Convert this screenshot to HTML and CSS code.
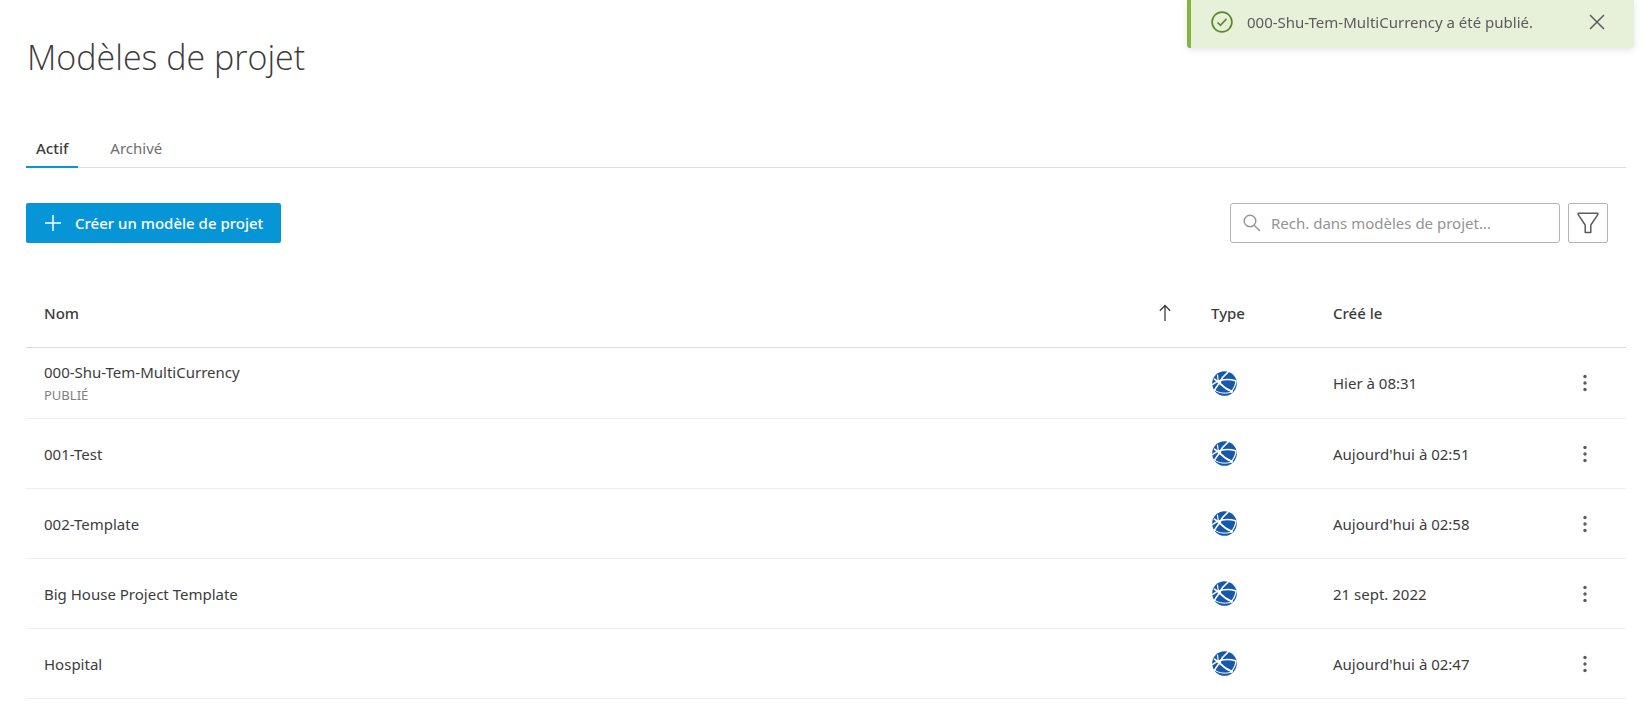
FILE: index.html
```html
<!DOCTYPE html>
<html lang="fr">
<head>
    <meta charset="UTF-8">
    <meta name="viewport" content="width=device-width, initial-scale=1.0">
    <title>Modèles de projet</title>
    <link rel="stylesheet" href="styles.css">
</head>
<body>
    <!-- shared icons -->
    <svg class="sprite" aria-hidden="true">
        <symbol id="icon-globe" viewBox="0 0 25 25">
            <circle cx="12.5" cy="12.5" r="12.3" fill="#1858a8"/>
            <g fill="none" stroke="#fff" stroke-linecap="round">
                <path stroke-width="1.600" d="M16 1.200C12.500 4 9.500 7.500 7.500 11.800C5.500 14.500 3.500 17 2.600 19"/>
                <path stroke-width="1.700" d="M2.500 8.200C4.500 9.200 6 10.300 7.500 11.800C11 15.500 15 18.500 19.500 20.300"/>
                <path stroke-width="1.500" d="M.5 13.500C5 9.500 14 6.800 23.500 9.800"/>
                <path stroke-width="1.300" d="M24 10C23.600 14 22 17.500 19.500 20.300"/>
                <path stroke-width="1" d="M2.500 19C7.500 22.800 14 22.800 20.500 21"/>
                <path stroke-width="1.200" d="M5.500 4.200C5.500 6.500 6.300 9.500 7.500 11.800"/>
            </g>
            <circle cx="7.500" cy="11.800" r="1.700" fill="#fff"/>
            <circle cx="19.500" cy="20.300" r="1.400" fill="#fff"/>
        </symbol>
        <symbol id="icon-more" viewBox="0 0 24 24">
            <g fill="#5c5c5c">
                <circle cx="12" cy="5.500" r="1.700"/>
                <circle cx="12" cy="12" r="1.700"/>
                <circle cx="12" cy="18.500" r="1.700"/>
            </g>
        </symbol>
    </svg>

    <div class="toast" role="status">
        <svg class="toast-icon" viewBox="0 0 22 22" fill="none" stroke="#5b8a2a">
            <circle cx="11" cy="11" r="9.900" stroke-width="1.700"/>
            <path d="M6.500 11.500l3 2.800l6-6.600" stroke-width="1.700"/>
        </svg>
        <span class="toast-text">000-Shu-Tem-MultiCurrency a été publié.</span>
        <button class="icon-button" type="button" aria-label="Fermer">
            <svg width="16" height="16" viewBox="0 0 16 16" fill="none" stroke="#5c5c5c" stroke-width="1.500">
                <path d="M1 1l14 14M15 1L1 15"/>
            </svg>
        </button>
    </div>

    <main class="page">
        <h1>Modèles de projet</h1>

        <nav class="tabs">
            <a class="tab active" href="#actif">Actif</a>
            <a class="tab" href="#archive">Archivé</a>
        </nav>

        <div class="toolbar">
            <button class="create-button" type="button">
                <svg width="18" height="18" viewBox="0 0 18 18" fill="none" stroke="#fff" stroke-width="1.500">
                    <path d="M9 1v16M1 9h16"/>
                </svg>
                Créer un modèle de projet
            </button>
            <div class="filters">
                <label class="search">
                    <svg width="18" height="18" viewBox="0 0 18 18" fill="none" stroke="#949494" stroke-width="1.400">
                        <circle cx="7" cy="7" r="5.800"/>
                        <path d="M11.200 11.200L17 17"/>
                    </svg>
                    <input type="text" placeholder="Rech. dans modèles de projet…" aria-label="Rechercher dans les modèles de projet">
                </label>
                <button class="filter-button" type="button" aria-label="Filtrer">
                    <svg width="22" height="22" viewBox="0 0 22 22" fill="none" stroke="#5c5c5c" stroke-width="1.500" stroke-linejoin="round">
                        <path d="M1.200 1.200h19.600v1.500L13.800 13v7.500h-5.600V13L1.200 2.700z"/>
                    </svg>
                </button>
            </div>
        </div>

        <table class="templates">
            <thead>
                <tr>
                    <th class="col-name" scope="col" aria-sort="ascending">
                        <div class="sortable">
                            Nom
                            <svg width="12" height="18" viewBox="0 0 12 18" fill="none" stroke="#3c3c3c" stroke-width="1.300">
                                <path d="M6 17V1.500M.8 6.700L6 1.500l5.200 5.200"/>
                            </svg>
                        </div>
                    </th>
                    <th class="col-type" scope="col">Type</th>
                    <th class="col-date" scope="col">Créé le</th>
                    <th class="col-menu" scope="col"></th>
                </tr>
            </thead>
            <tbody>
                <tr>
                    <td>000-Shu-Tem-MultiCurrency<span class="status">PUBLIÉ</span></td>
                    <td><svg class="globe"><use href="#icon-globe"/></svg></td>
                    <td>Hier à 08:31</td>
                    <td class="menu"><button class="icon-button" type="button" aria-label="Plus d'actions"><svg class="more"><use href="#icon-more"/></svg></button></td>
                </tr>
                <tr>
                    <td>001-Test</td>
                    <td><svg class="globe"><use href="#icon-globe"/></svg></td>
                    <td>Aujourd'hui à 02:51</td>
                    <td class="menu"><button class="icon-button" type="button" aria-label="Plus d'actions"><svg class="more"><use href="#icon-more"/></svg></button></td>
                </tr>
                <tr>
                    <td>002-Template</td>
                    <td><svg class="globe"><use href="#icon-globe"/></svg></td>
                    <td>Aujourd'hui à 02:58</td>
                    <td class="menu"><button class="icon-button" type="button" aria-label="Plus d'actions"><svg class="more"><use href="#icon-more"/></svg></button></td>
                </tr>
                <tr>
                    <td>Big House Project Template</td>
                    <td><svg class="globe"><use href="#icon-globe"/></svg></td>
                    <td>21 sept. 2022</td>
                    <td class="menu"><button class="icon-button" type="button" aria-label="Plus d'actions"><svg class="more"><use href="#icon-more"/></svg></button></td>
                </tr>
                <tr>
                    <td>Hospital</td>
                    <td><svg class="globe"><use href="#icon-globe"/></svg></td>
                    <td>Aujourd'hui à 02:47</td>
                    <td class="menu"><button class="icon-button" type="button" aria-label="Plus d'actions"><svg class="more"><use href="#icon-more"/></svg></button></td>
                </tr>
            </tbody>
        </table>
    </main>
</body>
</html>
```
FILE: styles.css
```css
* {
    box-sizing: border-box;
}

body {
    margin: 0;
    background-color: #ffffff;
    color: #3c3c3c;
    font-family: "Noto Sans", "Open Sans", sans-serif;
    font-size: 15px;
    line-height: 20px;
}

button,
input {
    font: inherit;
}

svg {
    display: block;
    flex: none;
}

.sprite {
    position: absolute;
    width: 0;
    height: 0;
}

.page {
    padding: 32px 23px 0 26px;
}

h1 {
    margin: 0;
    padding-left: 1px;
    font-family: "Open Sans", "Noto Sans", sans-serif;
    font-size: 34px;
    font-weight: 300;
    line-height: 50px;
}

/* Notification */
.toast {
    position: fixed;
    top: 0;
    right: 15px;
    display: flex;
    align-items: center;
    width: 447px;
    height: 48px;
    padding: 0 26px 5px 20px;
    border-left: 4px solid #87b340;
    border-radius: 0 0 3px 3px;
    background-color: #e7f0d9;
    box-shadow: 0 2px 6px rgba(60, 80, 120, 0.15);
}

.toast-icon {
    width: 22px;
    height: 22px;
    margin-right: 14px;
}

.toast-text {
    flex: 1;
    color: #5c5c5c;
    white-space: nowrap;
}

.icon-button {
    display: flex;
    padding: 3px;
    border: none;
    background: none;
    cursor: pointer;
}

/* Tabs */
.tabs {
    display: flex;
    gap: 22px;
    margin-top: 50px;
    border-bottom: 1px solid #dcdcdc;
}

.tab {
    margin-bottom: -1px;
    padding: 6px 10px 8px;
    border-bottom: 2px solid transparent;
    color: #6e6e6e;
    text-decoration: none;
}

.tab.active {
    border-bottom-color: #0696d7;
    color: #3c3c3c;
    font-weight: 500;
}

/* Toolbar */
.toolbar {
    display: flex;
    justify-content: space-between;
    margin-top: 35px;
    padding-right: 18px;
}

.create-button {
    display: flex;
    align-items: center;
    gap: 13px;
    height: 40px;
    padding: 0 18px;
    border: none;
    border-radius: 2px;
    background-color: #0696d7;
    color: #ffffff;
    font-weight: 500;
    cursor: pointer;
}

.filters {
    display: flex;
    gap: 8px;
}

.search {
    display: flex;
    align-items: center;
    gap: 10px;
    width: 330px;
    height: 40px;
    padding: 0 12px;
    border: 1px solid #b4b4b4;
    border-radius: 3px;
}

.search input {
    flex: 1;
    min-width: 0;
    padding: 0;
    border: none;
    outline: none;
    background: none;
    color: #3c3c3c;
}

.search input::placeholder {
    color: #949494;
    opacity: 1;
}

.filter-button {
    display: flex;
    align-items: center;
    justify-content: center;
    width: 40px;
    height: 40px;
    padding: 0;
    border: 1px solid #b4b4b4;
    border-radius: 2px;
    background-color: #ffffff;
    cursor: pointer;
}

/* Table */
.templates {
    width: 100%;
    margin-top: 35px;
    border-collapse: separate;
    border-spacing: 0;
    table-layout: fixed;
}

.templates th,
.templates td {
    height: 70px;
    padding: 0 18px;
    text-align: left;
    vertical-align: middle;
}

.templates th {
    border-bottom: 1px solid #dcdcdc;
    font-weight: 500;
}

.templates td {
    border-bottom: 1px solid #eeeeee;
}

.templates tbody tr:first-child td {
    height: 71px;
}

.templates td.menu {
    padding-left: 21px;
}

.templates .col-type {
    width: 122px;
}

.templates .col-date {
    width: 234px;
}

.templates .col-menu {
    width: 77px;
}

.sortable {
    display: flex;
    align-items: center;
    justify-content: space-between;
    padding-right: 4px;
}

.status {
    display: block;
    margin-top: 3px;
    color: #808080;
    font-size: 13px;
}

.globe {
    width: 25px;
    height: 25px;
    margin-left: 1px;
}

.more {
    width: 24px;
    height: 24px;
}
```
